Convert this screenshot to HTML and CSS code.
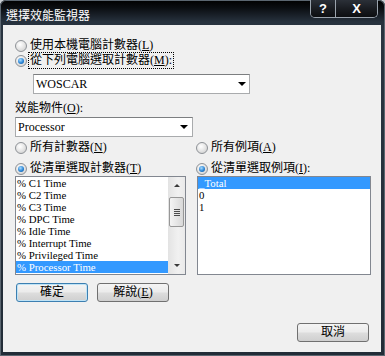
FILE: index.html
```html
<!DOCTYPE html>
<html>
<head>
<meta charset="utf-8">
<link rel="stylesheet" href="styles.css">
</head>
<body>
<div class="window">
  <div class="titlebar">
    <span class="title">選擇效能監視器</span>
    <div class="caption-btns">
      <span class="cb help">?</span>
      <span class="cb close">X</span>
    </div>
  </div>
  <div class="client">
    <div class="radio row1"><span class="rb"></span><span>使用本機電腦計數器(<u>L</u>)</span></div>
    <div class="radio"><span class="rb on"></span><span class="focus">從下列電腦選取計數器(<u>M</u>):</span></div>
    <div class="combo c1"><span class="val">WOSCAR</span><span class="arrow"></span></div>
    <div class="label">效能物件(<u>O</u>):</div>
    <div class="combo c2"><span class="val">Processor</span><span class="arrow"></span></div>
    <div class="cols">
      <div class="col">
        <div class="radio"><span class="rb"></span><span>所有計數器(<u>N</u>)</span></div>
        <div class="radio r2"><span class="rb on"></span><span>從清單選取計數器(<u>T</u>)</span></div>
        <div class="listbox lb-left">
          <div class="items">
            <div class="item">% C1 Time</div>
            <div class="item">% C2 Time</div>
            <div class="item">% C3 Time</div>
            <div class="item">% DPC Time</div>
            <div class="item">% Idle Time</div>
            <div class="item">% Interrupt Time</div>
            <div class="item">% Privileged Time</div>
            <div class="item sel">% Processor Time</div>
          </div>
          <div class="sb">
            <div class="sbbtn"><span class="tri-up"></span></div>
            <div class="thumb"><span class="grip"></span></div>
            <div class="spacer"></div>
            <div class="sbbtn"><span class="tri-down"></span></div>
          </div>
        </div>
      </div>
      <div class="col">
        <div class="radio"><span class="rb"></span><span>所有例項(<u>A</u>)</span></div>
        <div class="radio r2"><span class="rb on"></span><span>從清單選取例項(<u>I</u>):</span></div>
        <div class="listbox lb-right">
          <div class="items">
            <div class="item sel">_Total</div>
            <div class="item">0</div>
            <div class="item">1</div>
          </div>
        </div>
      </div>
    </div>
    <div class="btnrow">
      <button class="btn default">確定</button>
      <button class="btn">解說(<u>E</u>)</button>
    </div>
    <div class="btnrow end">
      <button class="btn">取消</button>
    </div>
  </div>
</div>
</body>
</html>
```
FILE: styles.css
```css
html, body {
  margin: 0;
  padding: 0;
}
body {
  width: 385px;
  height: 356px;
  overflow: hidden;
  background: #c9cdd2;
  font-family: "Liberation Serif", "Noto Sans CJK TC", serif;
  font-size: 12px;
  color: #000;
}
.window {
  width: 385px;
  height: 356px;
  display: flex;
  flex-direction: column;
  border-radius: 6px 6px 0 0;
  background: linear-gradient(to bottom, #000 0px, #0b0e12 8px, #27323e 22px, #2a3541 40px, #222c37 100%);
  box-shadow: inset 0 0 0 1px #5b6670;
}
.titlebar {
  height: 25px;
  display: flex;
  align-items: flex-start;
  flex: none;
}
.title {
  color: #fff;
  font-family: "Noto Sans CJK TC", sans-serif;
  font-size: 12px;
  line-height: 12px;
  margin: 9px 0 0 6px;
}
.caption-btns {
  margin-left: auto;
  margin-right: 7px;
  display: flex;
  height: 17px;
  border: 1px solid #9aa3ad;
  border-top: none;
  border-radius: 0 0 5px 5px;
  overflow: hidden;
}
.cb {
  display: flex;
  align-items: center;
  justify-content: center;
  color: #fff;
  font-family: "Liberation Sans", sans-serif;
  font-weight: bold;
  font-size: 13px;
  background: linear-gradient(to bottom, #2b3038 0%, #1a1d22 50%, #0c0e11 100%);
}
.help {
  width: 24px;
  border-right: 1px solid #9aa3ad;
}
.close {
  width: 41px;
}
.client {
  flex: 1;
  margin: 0 4px 4px 3px;
  background: #f0f0f0;
  display: flex;
  flex-direction: column;
  padding: 0 12px;
}
u {
  text-decoration: underline;
}
.radio {
  display: flex;
  align-items: center;
  height: 15px;
  line-height: 15px;
  white-space: nowrap;
}
.row1 {
  margin-top: 13px;
}
.rb {
  flex: none;
  position: relative;
  width: 12px;
  height: 12px;
  box-sizing: border-box;
  border-radius: 50%;
  border: 1px solid #8e9297;
  background: radial-gradient(circle at 40% 35%, #ffffff 0%, #e8e8e8 45%, #c9c9c9 100%);
  margin-right: 3px;
}
.rb.on::after {
  content: "";
  position: absolute;
  left: 2px;
  top: 2px;
  width: 6px;
  height: 6px;
  border-radius: 50%;
  background: radial-gradient(circle at 40% 35%, #a8dcff 0%, #2b85d6 55%, #0b4d8f 100%);
}
.focus {
  outline: 1px dotted #000;
  outline-offset: 0;
  padding: 0 1px;
  margin-left: -1px;
}
.combo {
  height: 20px;
  box-sizing: border-box;
  border: 1px solid #a9abad;
  border-top-color: #7c7e80;
  background: #fff;
  display: flex;
  align-items: center;
  padding-left: 2px;
  flex: none;
}
.val {
  font-family: "Liberation Serif", serif;
}
.c1 {
  margin: 6px 0 0 18px;
  width: 217px;
}
.c1 .arrow {
  margin-right: 3px;
}
.c2 {
  margin-top: 2px;
  width: 178px;
}
.c2 .arrow {
  margin-right: 4px;
}
.arrow {
  margin-left: auto;
  width: 0;
  height: 0;
  border-left: 4px solid transparent;
  border-right: 4px solid transparent;
  border-top: 4px solid #000;
}
.label {
  margin-top: 7px;
  height: 14px;
  line-height: 14px;
}
.cols {
  display: grid;
  grid-template-columns: 171px 175px;
  column-gap: 10px;
  margin-top: 3px;
}
.col {
  display: flex;
  flex-direction: column;
}
.r2 {
  margin-top: 6px;
}
.listbox {
  height: 99px;
  box-sizing: border-box;
  border: 1px solid #828790;
  background: #fff;
  display: flex;
}
.lb-right {
  margin-left: 1px;
}
.items {
  flex: 1;
  display: flex;
  flex-direction: column;
}
.item {
  height: 12px;
  line-height: 12px;
  font-size: 10.8px;
  white-space: nowrap;
  padding-left: 1px;
}
.item.sel {
  background: #3399ff;
  color: #fff;
}
.sb {
  width: 17px;
  flex: none;
  display: flex;
  flex-direction: column;
  background: linear-gradient(to right, #e3e3e3, #f1f1f1 60%, #e9e9e9);
}
.sbbtn {
  height: 17px;
  display: flex;
  align-items: center;
  justify-content: center;
}
.tri-up {
  width: 0;
  height: 0;
  border-left: 3px solid transparent;
  border-right: 3px solid transparent;
  border-bottom: 3px solid #3a3a3a;
}
.tri-down {
  width: 0;
  height: 0;
  border-left: 3px solid transparent;
  border-right: 3px solid transparent;
  border-top: 3px solid #3a3a3a;
}
.thumb {
  margin: 3px 1px 0 1px;
  height: 30px;
  box-sizing: border-box;
  border: 1px solid #979797;
  border-radius: 2px;
  background: linear-gradient(to right, #f4f4f4, #e6e6e6 50%, #d8d8d8);
  display: flex;
  align-items: center;
  justify-content: center;
}
.grip {
  width: 6px;
  height: 1px;
  background: #4d4d4d;
  box-shadow: 0 -2px 0 #4d4d4d, 0 2px 0 #4d4d4d, 0 4px 0 #4d4d4d;
  margin-top: -2px;
}
.spacer {
  flex: 1;
}
.btnrow {
  display: flex;
  gap: 9px;
  margin-top: 8px;
  padding-left: 1px;
}
.btnrow.end {
  margin-top: 21px;
  justify-content: flex-end;
}
.btn {
  width: 72px;
  height: 19px;
  box-sizing: border-box;
  border: 1px solid #707070;
  border-radius: 3px;
  background: linear-gradient(to bottom, #f4f4f4 0%, #ebebeb 48%, #dddddd 52%, #cfcfcf 100%);
  font-family: "Liberation Serif", "Noto Sans CJK TC", serif;
  font-size: 12px;
  line-height: 17px;
  padding: 0;
  color: #000;
}
.btn.default {
  border-color: #3c7fb1;
  box-shadow: inset 0 0 0 1px #bfe3f6;
}
```
